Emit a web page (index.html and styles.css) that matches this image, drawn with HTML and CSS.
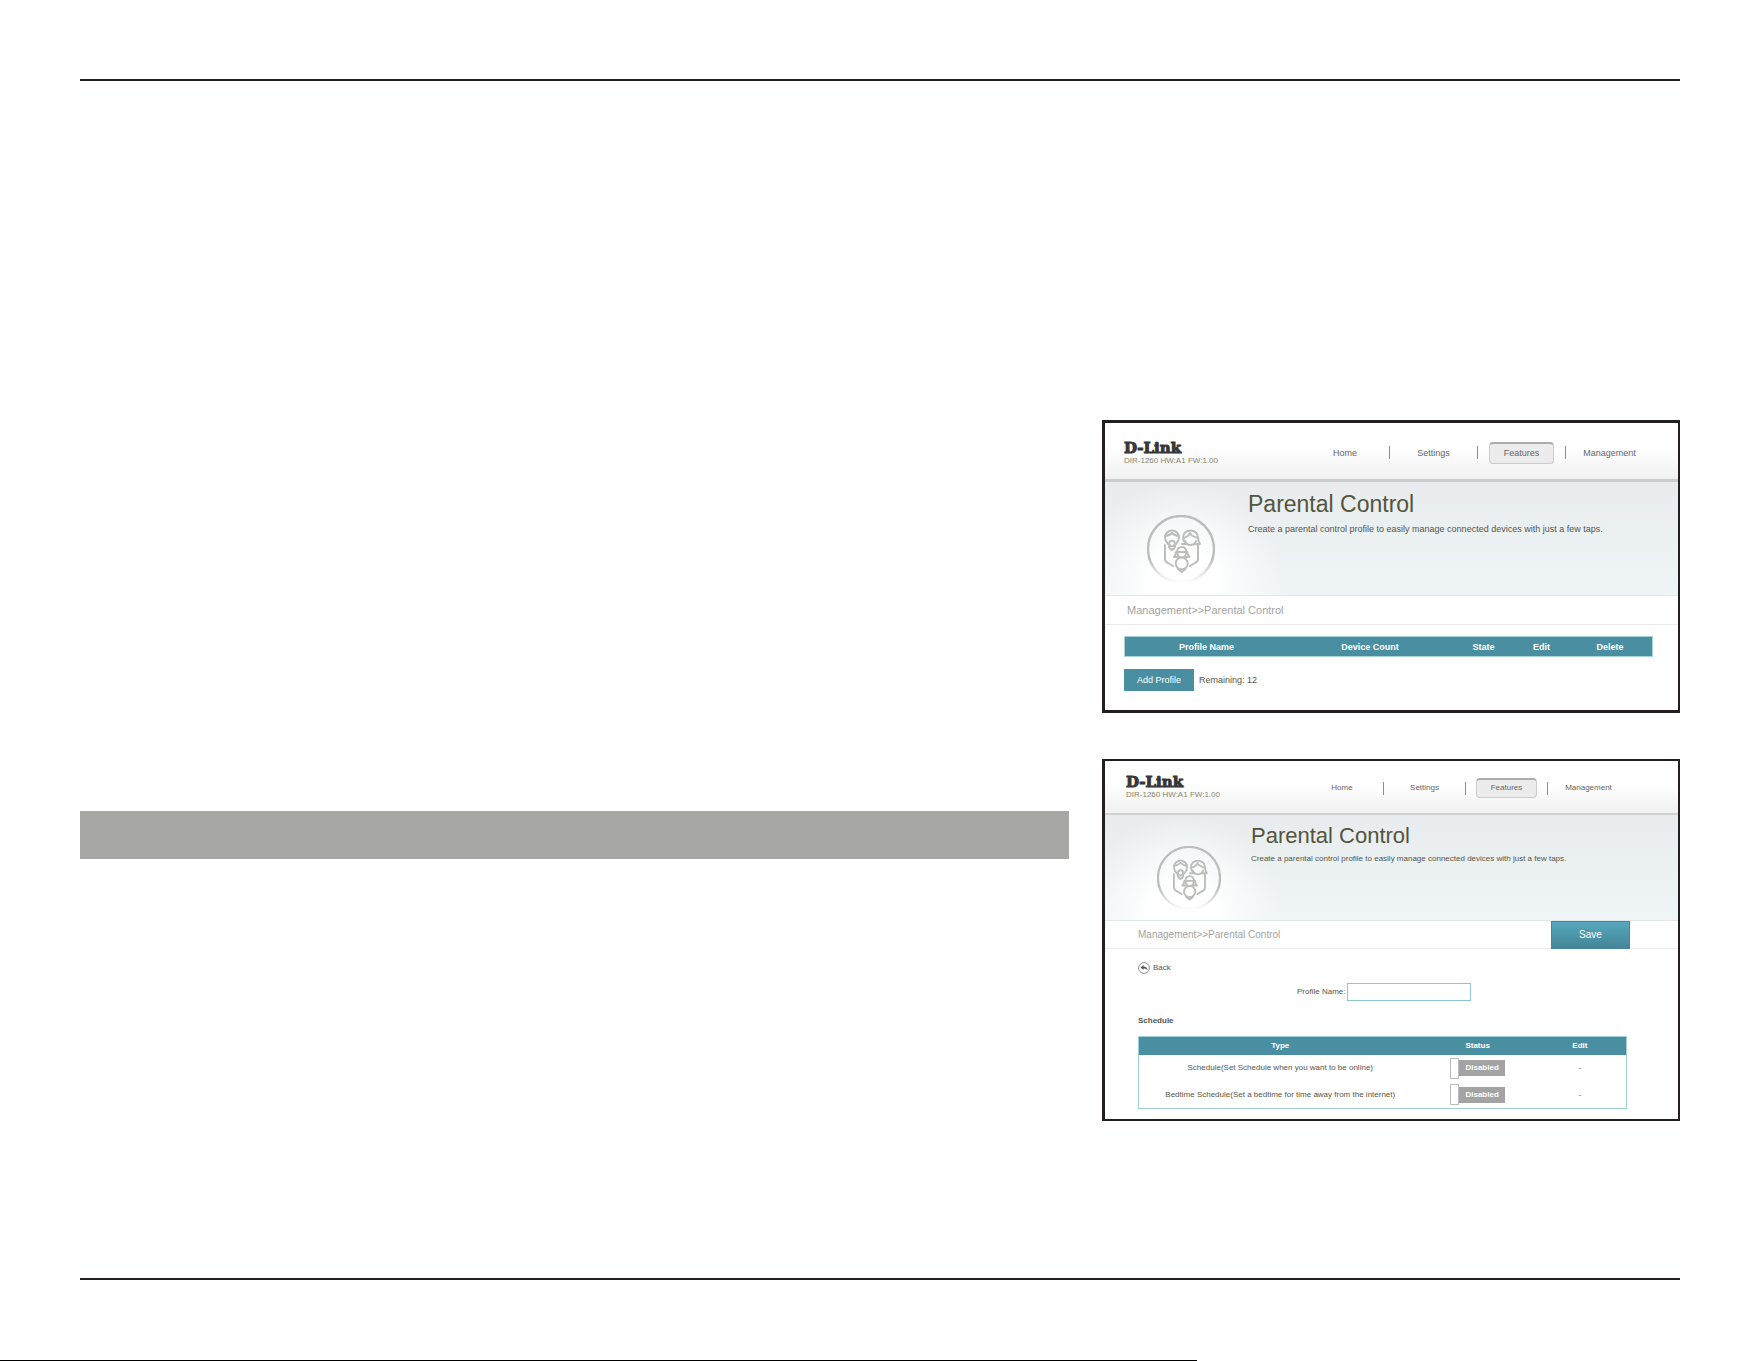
FILE: index.html
```
<!DOCTYPE html>
<html lang="en">
  <head>
    <meta charset="UTF-8" />
    <meta name="viewport" content="width=device-width, initial-scale=1.0" />
    <title>Parental Control</title>
    <link rel="stylesheet" href="styles.css">
  </head>
  <body>
    <!-- shared icon -->
    <svg class="defs" width="0" height="0" aria-hidden="true">
      <linearGradient id="fade" x1="0" y1="0" x2="0" y2="68" gradientUnits="userSpaceOnUse">
        <stop offset="0.65" stop-color="#bdbdbb" />
        <stop offset="1" stop-color="#bdbdbb" stop-opacity="0" />
      </linearGradient>
      <symbol id="family" viewBox="0 0 68 68">
        <g fill="none" stroke-width="2">
          <circle cx="34" cy="34" r="33" stroke="url(#fade)" stroke-width="2.400" />
          <g stroke="#bdbdbb" stroke-linecap="round" stroke-linejoin="round">
            <path d="M21 29c-2-2-3-4-3-6.500a7 7 0 0 1 14 0c0 2.500-1 4.500-3 6.500" />
            <path d="M18 21c3 0 5-1 7-3 2 2 4 3 7 3" />
            <circle cx="25" cy="28.500" r="2.800" />
            <path d="M22 31c0 2 1 3 3 4 2-1 3-2 3-4" />
            <path d="M35 29h5c-3-2-4-4-4-6.500a7.500 7 0 0 1 15 0c0 2.500 1 5 2 6.500h-5" />
            <path d="M37 23c3-1 5-2 6-5 1 3 4 4 8 5M38 26c1 3 3 4 5.500 4s4.500-1 5.500-4" />
            <path d="M18 30v14c0 2 1 3 3 4l5 3M51 30v14c0 2-1 3-3 4l-5 3" />
            <path d="M30 38c0-4 2-6 4.700-6s4.700 2 4.700 6M30 37h9.400M29 37c0 2-1 4-2 5h4M40.400 37c0 2 1 4 2 5h-4" />
            <path d="M30.500 38c0 3 2 4.500 4.200 4.500s4.200-1.500 4.200-4.500" />
            <circle cx="34.700" cy="48.500" r="6" />
            <path d="M31 54l3.700 3 3.700-3" />
          </g>
        </g>
      </symbol>
    </svg>

    <main class="sheet">
      <div class="column">
        <div class="bar"></div>
      </div>

      <div class="column shots">
        <section class="shot shot-list">
          <header class="top">
            <div class="brand">
              <span class="logo">D-Link</span>
              <span class="version">DIR-1260 HW:A1 FW:1.00</span>
            </div>
            <nav class="menu">
              <a href="#"><span>Home</span></a>
              <a href="#"><span>Settings</span></a>
              <a href="#"><span class="active">Features</span></a>
              <a href="#"><span>Management</span></a>
            </nav>
          </header>
          <div class="hero">
            <svg class="icon"><use href="#family" /></svg>
            <div>
              <h2>Parental Control</h2>
              <p>Create a parental control profile to easily manage connected devices with just a few taps.</p>
            </div>
          </div>
          <div class="crumb">
            <span>Management&gt;&gt;Parental Control</span>
          </div>
          <div class="content">
            <table class="profiles">
              <thead>
                <tr>
                  <th class="col-name">Profile Name</th>
                  <th class="col-count">Device Count</th>
                  <th class="col-state">State</th>
                  <th class="col-edit">Edit</th>
                  <th class="col-delete">Delete</th>
                </tr>
              </thead>
            </table>
            <div class="add-row">
              <button type="button" class="add-btn">Add Profile</button>
              <span>Remaining: 12</span>
            </div>
          </div>
        </section>

        <section class="shot shot-edit">
          <header class="top">
            <div class="brand">
              <span class="logo">D-Link</span>
              <span class="version">DIR-1260 HW:A1 FW:1.00</span>
            </div>
            <nav class="menu">
              <a href="#"><span>Home</span></a>
              <a href="#"><span>Settings</span></a>
              <a href="#"><span class="active">Features</span></a>
              <a href="#"><span>Management</span></a>
            </nav>
          </header>
          <div class="hero">
            <svg class="icon"><use href="#family" /></svg>
            <div>
              <h2>Parental Control</h2>
              <p>Create a parental control profile to easily manage connected devices with just a few taps.</p>
            </div>
          </div>
          <div class="crumb">
            <span>Management&gt;&gt;Parental Control</span>
            <button type="button" class="save-btn">Save</button>
          </div>
          <form class="content">
            <a href="#" class="back">
              <svg width="12" height="12" viewBox="0 0 12 12">
                <circle cx="6" cy="6" r="5.400" fill="none" stroke="#777" stroke-width="0.800" />
                <path d="M2.500 5.500L5.500 3v1.500c2.500 0 4 1.500 4 4-1-1.500-2-2-4-2V8z" fill="#555" />
              </svg>
              Back
            </a>
            <div class="field">
              <label for="profile-name">Profile Name:</label>
              <input type="text" id="profile-name">
            </div>
            <h3>Schedule</h3>
            <table class="schedule">
              <thead>
                <tr>
                  <th class="col-type">Type</th>
                  <th class="col-status">Status</th>
                  <th>Edit</th>
                </tr>
              </thead>
              <tbody>
                <tr>
                  <td>Schedule(Set Schedule when you want to be online)</td>
                  <td>
                    <label class="toggle"><input type="checkbox"><span>Disabled</span></label>
                  </td>
                  <td>-</td>
                </tr>
                <tr>
                  <td>Bedtime Schedule(Set a bedtime for time away from the internet)</td>
                  <td>
                    <label class="toggle"><input type="checkbox"><span>Disabled</span></label>
                  </td>
                  <td>-</td>
                </tr>
              </tbody>
            </table>
          </form>
        </section>
      </div>
    </main>
    <div class="page-edge"></div>
  </body>
</html>
```
FILE: styles.css
```
* {
  box-sizing: border-box;
}
body {
  margin: 0;
  min-height: 100vh;
  display: flex;
  flex-direction: column;
  background: #fff;
  color: #55564a;
  font-family: "Liberation Sans", Arial, sans-serif;
}
h2,
h3,
p {
  margin: 0;
  font-weight: normal;
}
a {
  color: inherit;
  text-decoration: none;
}
button,
input {
  font-family: inherit;
  padding: 0;
  margin: 0;
}
button {
  cursor: pointer;
}
table {
  width: 100%;
  border-collapse: collapse;
  table-layout: fixed;
}
th,
td {
  padding: 0;
  text-align: center;
}
.defs {
  position: absolute;
}

/* sheet */
.sheet {
  display: grid;
  grid-template-columns: 989fr 578fr;
  gap: 33px;
  margin: 79px 81px 0 80px;
  padding: 339px 0 157px;
  border-top: 2px solid #231f20;
  border-bottom: 2px solid #231f20;
}
.bar {
  height: 48px;
  margin-top: 391px;
  background: #a7a7a5;
}
.shots {
  display: flex;
  flex-direction: column;
  gap: 46px;
}
.page-edge {
  width: 68%;
  height: 1px;
  margin-top: auto;
  background: #000;
}

/* parts both cards share */
.shot {
  border: 3px solid #231f20;
  border-right-width: 2px;
  background: #fff;
  font-size: 9px;
  line-height: 12px;
}
.top {
  display: flex;
  justify-content: space-between;
  align-items: center;
  height: 59px;
  padding: 3px 25px 0 19px;
  border-bottom: 3px solid #c9cdcd;
  background: linear-gradient(#fff 45%, #f0f0f0);
}
.brand {
  display: flex;
  flex-direction: column;
}
.logo {
  font-family: "DejaVu Serif", serif;
  font-size: 15px;
  font-weight: bold;
  line-height: 16px;
  color: #363636;
  -webkit-text-stroke: 1px #363636;
}
.version {
  font-size: 8px;
  line-height: 10px;
  color: #85866f;
}
.menu {
  display: grid;
  grid-template-columns: repeat(4, 88px);
  color: #666;
}
.menu a {
  display: flex;
  justify-content: center;
  align-items: center;
  height: 13px;
}
.menu a + a {
  border-left: 1px solid #8c8c8c;
}
.menu .active {
  width: 65px;
  padding: 3px 0 4px;
  border: 1px solid #ccc;
  border-top: 2px solid #adadad;
  border-radius: 4px;
  background: #ececec;
  text-align: center;
}
.hero {
  display: flex;
  align-items: flex-start;
  gap: 33px;
  height: 114px;
  padding: 8px 0 0 42px;
  border-bottom: 1px solid #e2e8e9;
  background:
    radial-gradient(circle at 78px 100px, #fff 30px, rgba(255, 255, 255, 0) 100px),
    linear-gradient(#e8ecee, #eff5f6);
}
.icon {
  width: 68px;
  height: 68px;
  margin-top: 25px;
}
.hero h2 {
  font-size: 23px;
  line-height: 28px;
  color: #54553d;
}
.hero p {
  margin-top: 5px;
}
.crumb {
  display: flex;
  justify-content: space-between;
  align-items: center;
  height: 29px;
  padding-left: 22px;
  border-bottom: 1px solid #ebebeb;
  font-size: 11px;
  color: #a3a3a3;
}
th {
  background: #4a8fa1;
  color: #fff;
}

/* profile list */
.shot-list .content {
  padding: 11px 25px 19px 19px;
}
.profiles {
  border: 1px solid #a9d3db;
}
.profiles th {
  height: 20px;
}
.col-name,
.col-count {
  width: 31%;
}
.col-state {
  width: 12%;
}
.col-edit {
  width: 10%;
}
.add-row {
  display: flex;
  align-items: center;
  gap: 5px;
  margin-top: 12px;
}
.add-btn {
  height: 22px;
  padding: 0 13px;
  border: 0;
  background: #4a8fa1;
  color: #fff;
  font-size: 9px;
}

/* profile editor */
.shot-edit {
  border-top-width: 2px;
  border-bottom-width: 2px;
  font-size: 8px;
}
.shot-edit .top {
  height: 54px;
  padding: 0 49px 0 21px;
  border-bottom: 2px solid #d0d2d2;
}
.shot-edit .menu {
  grid-template-columns: repeat(4, 82px);
  margin-top: 2px;
}
.shot-edit .menu .active {
  width: 61px;
  padding: 2px 0 3px;
}
.shot-edit .hero {
  gap: 30px;
  height: 106px;
  padding: 7px 0 0 52px;
}
.shot-edit .icon {
  width: 64px;
  height: 64px;
  margin-top: 24px;
}
.shot-edit .hero h2 {
  font-size: 22px;
}
.shot-edit .hero p {
  margin-top: 3px;
}
.shot-edit .crumb {
  height: 28px;
  padding: 0 48px 0 33px;
  font-size: 10px;
}
.save-btn {
  width: 79px;
  height: 28px;
  margin: -1px 0;
  border: 1px solid #43879a;
  background: linear-gradient(#55a8bd, #458597);
  color: #fff;
  font-size: 10px;
}
.shot-edit .content {
  padding: 13px 51px 10px 33px;
}
.back {
  display: flex;
  align-items: center;
  gap: 3px;
}
.field {
  display: flex;
  align-items: center;
  gap: 2px;
  margin: 9px 0 14px 159px;
}
.field input {
  width: 124px;
  height: 18px;
  border: 1px solid #8dc6d0;
  font-size: 8px;
}
.shot-edit h3 {
  margin-bottom: 9px;
  font-size: 8px;
  font-weight: bold;
  line-height: 12px;
}
.schedule {
  border: 1px solid #9fd0d8;
}
.schedule th {
  height: 18px;
}
.schedule td {
  height: 27px;
}
.col-type {
  width: 58%;
}
.col-status {
  width: 23%;
}
.toggle {
  display: flex;
  justify-content: center;
  align-items: center;
}
.toggle input {
  appearance: none;
  width: 9px;
  height: 21px;
  border: 1px solid #bbb;
  background: #fff;
}
.toggle span {
  width: 46px;
  line-height: 16px;
  background: #a3a3a3;
  color: #fff;
  font-weight: bold;
}
```
